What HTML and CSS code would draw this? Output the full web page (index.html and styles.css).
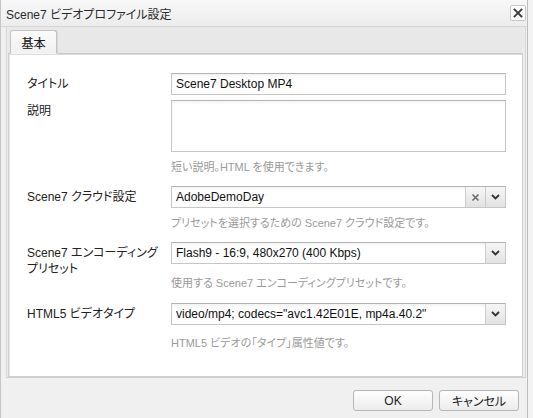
FILE: index.html
```html
<!DOCTYPE html>
<html lang="ja">
<head>
<meta charset="utf-8">
<title>Scene7 ビデオプロファイル設定</title>
<link rel="stylesheet" href="styles.css">
</head>
<body>
<div class="dialog">
  <div class="titlebar">
    <span class="title">Scene7 ビデオプロファイル設定</span>
    <span class="close"><svg width="12" height="12" viewBox="0 0 12 12"><path d="M2.5 2.5 L9.5 9.5 M9.5 2.5 L2.5 9.5" stroke="#3c3c3c" stroke-width="1.8" stroke-linecap="square" fill="none"/></svg></span>
  </div>
  <div class="tabpanel">
    <div class="strip"><div class="tab">基本</div></div>
    <div class="panel">
      <div class="row">
        <div class="label">タイトル</div>
        <div class="field"><div class="input">Scene7 Desktop MP4</div></div>
      </div>
      <div class="row">
        <div class="label">説明</div>
        <div class="field">
          <div class="textarea"></div>
          <div class="hint">短い説明。HTML を使用できます。</div>
        </div>
      </div>
      <div class="row">
        <div class="label">Scene7 クラウド設定</div>
        <div class="field">
          <div class="input combo"><span class="val">AdobeDemoDay</span>
            <span class="btn clear"><svg width="9" height="9" viewBox="0 0 9 9"><path d="M1.5 1.5 L7.5 7.5 M7.5 1.5 L1.5 7.5" stroke="#6a6a6a" stroke-width="1.6" fill="none"/></svg></span>
            <span class="btn arrow"><svg width="9" height="6" viewBox="0 0 9 6"><path d="M1 1 L4.5 4.5 L8 1" stroke="#333" stroke-width="1.8" fill="none"/></svg></span>
          </div>
          <div class="hint">プリセットを選択するための Scene7 クラウド設定です。</div>
        </div>
      </div>
      <div class="row">
        <div class="label two">Scene7 エンコーディング<br>プリセット</div>
        <div class="field">
          <div class="input combo"><span class="val">Flash9 - 16:9, 480x270 (400 Kbps)</span>
            <span class="btn arrow"><svg width="9" height="6" viewBox="0 0 9 6"><path d="M1 1 L4.5 4.5 L8 1" stroke="#333" stroke-width="1.8" fill="none"/></svg></span>
          </div>
          <div class="hint hint-tall">使用する Scene7 エンコーディングプリセットです。</div>
        </div>
      </div>
      <div class="row">
        <div class="label">HTML5 ビデオタイプ</div>
        <div class="field">
          <div class="input combo"><span class="val">video/mp4; codecs="avc1.42E01E, mp4a.40.2"</span>
            <span class="btn arrow"><svg width="9" height="6" viewBox="0 0 9 6"><path d="M1 1 L4.5 4.5 L8 1" stroke="#333" stroke-width="1.8" fill="none"/></svg></span>
          </div>
          <div class="hint hint-last">HTML5 ビデオの「タイプ」属性値です。</div>
        </div>
      </div>
    </div>
  </div>
  <div class="footer">
    <button class="button">OK</button>
    <button class="button">キャンセル</button>
  </div>
</div>
</body>
</html>
```

FILE: styles.css
```css
html, body {
  margin: 0;
  padding: 0;
}
body {
  width: 533px;
  height: 418px;
  overflow: hidden;
  background: #f3f3f3;
  font-family: "Liberation Sans", "Noto Sans CJK JP", sans-serif;
  font-size: 12px;
  color: #222;
  font-feature-settings: "palt";
}
.dialog {
  width: 526px;
  height: 418px;
  border-left: 1px solid #c6c6c6;
  border-right: 1px solid #bdbdbd;
  background: #f0f0f0;
  display: flex;
  flex-direction: column;
}
.titlebar {
  height: 26px;
  flex: none;
  border-bottom: 1px solid #d6d6d6;
  background: linear-gradient(#f8f8f8, #ececec);
  display: flex;
  align-items: center;
  justify-content: space-between;
  padding: 0 1px 0 5px;
}
.title {
  color: #2a2a2a;
  font-size: 12px;
}
.close {
  width: 14px;
  height: 14px;
  border: 1px solid #c8c8c8;
  border-radius: 2px;
  background: #fbfbfb;
  display: flex;
  align-items: center;
  justify-content: center;
}
.tabpanel {
  flex: 1;
  margin: 0 1px 0 5px;
  border-left: 1px solid #d6d6d6;
  border-right: 1px solid #d6d6d6;
  border-bottom: 1px solid #d0d0d0;
  padding: 0 2px 0 1px;
  background: #ececec;
  display: flex;
  flex-direction: column;
}
.strip {
  height: 26px;
  flex: none;
  border-bottom: 1px solid #c8c8c8;
  display: flex;
  align-items: flex-end;
  padding-left: 2px;
  background: #e8e8e8;
}
.tab {
  width: 45px;
  height: 22px;
  margin-bottom: -1px;
  border: 1px solid #c2c2c2;
  border-bottom: 1px solid #f6f6f6;
  border-radius: 3px 3px 0 0;
  background: linear-gradient(#fafafa, #f1f1f1);
  box-shadow: 1px 0 0 #d8d8d8;
  display: flex;
  align-items: center;
  justify-content: center;
  font-size: 12px;
  color: #1a1a1a;
  -webkit-text-stroke: 0.2px #1a1a1a;
}
.panel {
  flex: 1;
  background: #fff;
  border: 1px solid #cfcfcf;
  border-top-color: #dcdcdc;
  box-shadow: inset 1px 0 0 #e6e6e6;
  padding: 18px 16px 0 18px;
  display: flex;
  flex-direction: column;
  gap: 5px;
}
.row {
  display: grid;
  grid-template-columns: 144px 1fr;
}
.label {
  line-height: 22px;
  color: #222;
}
.label.two {
  line-height: 16px;
  padding-top: 3px;
}
.field {
  display: flex;
  flex-direction: column;
}
.input {
  height: 20px;
  border: 1px solid #c6c6c6;
  border-top-color: #b4b4b4;
  background: linear-gradient(#f2f2f2, #fff 4px);
  line-height: 20px;
  padding-left: 4px;
  font-size: 12px;
  color: #111;
}
.textarea {
  height: 50px;
  border: 1px solid #c6c6c6;
  border-top-color: #b4b4b4;
  background: linear-gradient(#f2f2f2, #fff 4px);
}
.combo {
  display: flex;
  align-items: stretch;
  padding-left: 0;
}
.combo .val {
  flex: 1;
  padding-left: 4px;
}
.btn {
  width: 19px;
  border-left: 1px solid #cbcbcb;
  background: linear-gradient(#f6f6f6, #e2e2e2);
  display: flex;
  align-items: center;
  justify-content: center;
}
.hint {
  font-size: 11px;
  line-height: 16px;
  color: #9a9a9a;
  margin-top: 7px;
  margin-bottom: 6px;
}
.hint-tall {
  margin-top: 11px;
  margin-bottom: 7px;
}
.hint-last {
  margin-top: 10px;
}
.footer {
  height: 40px;
  flex: none;
  display: flex;
  justify-content: flex-end;
  gap: 6px;
  padding: 12px 8px 0 0;
  box-sizing: border-box;
}
.button {
  width: 80px;
  height: 21px;
  border: 1px solid #b6b6b6;
  border-radius: 3px;
  background: linear-gradient(#fefefe, #ececec);
  font-family: "Liberation Sans", "Noto Sans CJK JP", sans-serif;
  font-size: 12px;
  color: #222;
  padding: 0;
  font-feature-settings: "palt";
}
```
